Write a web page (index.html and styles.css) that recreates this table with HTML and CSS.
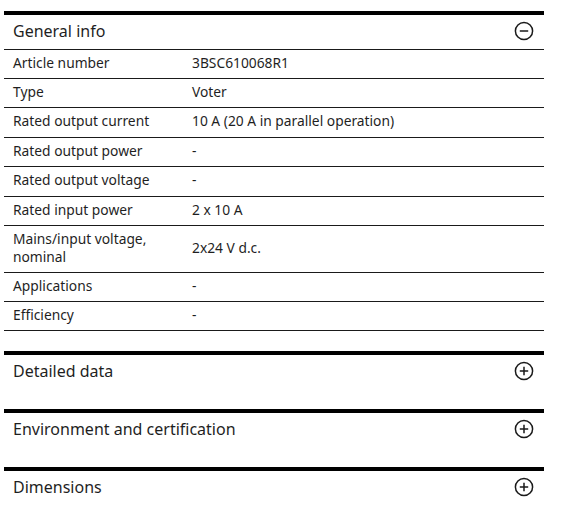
FILE: index.html
```html
<!DOCTYPE html>
<html lang="en">
<head>
<meta charset="utf-8">
<link rel="stylesheet" href="styles.css">
</head>
<body>
<div class="page">
  <section class="section expanded">
    <div class="section-head">
      <span class="section-title">General info</span>
      <svg class="toggle" viewBox="0 0 20 20" width="20" height="20"><circle cx="10" cy="10" r="8.6" fill="none" stroke="#1a1a1a" stroke-width="1.5"/><path d="M5.8 10h8.4" stroke="#1a1a1a" stroke-width="1.5"/></svg>
    </div>
    <div class="rows">
      <div class="row"><div class="label">Article number</div><div class="value">3BSC610068R1</div></div>
      <div class="row"><div class="label">Type</div><div class="value">Voter</div></div>
      <div class="row tall"><div class="label">Rated output current</div><div class="value">10 A (20 A in parallel operation)</div></div>
      <div class="row"><div class="label">Rated output power</div><div class="value">-</div></div>
      <div class="row tall"><div class="label">Rated output voltage</div><div class="value">-</div></div>
      <div class="row"><div class="label">Rated input power</div><div class="value">2 x 10 A</div></div>
      <div class="row"><div class="label">Mains/input voltage, nominal</div><div class="value">2x24 V d.c.</div></div>
      <div class="row"><div class="label">Applications</div><div class="value">-</div></div>
      <div class="row"><div class="label">Efficiency</div><div class="value">-</div></div>
    </div>
  </section>
  <section class="section">
    <div class="section-head">
      <span class="section-title">Detailed data</span>
      <svg class="toggle" viewBox="0 0 20 20" width="20" height="20"><circle cx="10" cy="10" r="8.6" fill="none" stroke="#1a1a1a" stroke-width="1.5"/><path d="M5.8 10h8.4M10 5.8v8.4" stroke="#1a1a1a" stroke-width="1.5"/></svg>
    </div>
  </section>
  <section class="section">
    <div class="section-head">
      <span class="section-title">Environment and certification</span>
      <svg class="toggle" viewBox="0 0 20 20" width="20" height="20"><circle cx="10" cy="10" r="8.6" fill="none" stroke="#1a1a1a" stroke-width="1.5"/><path d="M5.8 10h8.4M10 5.8v8.4" stroke="#1a1a1a" stroke-width="1.5"/></svg>
    </div>
  </section>
  <section class="section">
    <div class="section-head">
      <span class="section-title">Dimensions</span>
      <svg class="toggle" viewBox="0 0 20 20" width="20" height="20"><circle cx="10" cy="10" r="8.6" fill="none" stroke="#1a1a1a" stroke-width="1.5"/><path d="M5.8 10h8.4M10 5.8v8.4" stroke="#1a1a1a" stroke-width="1.5"/></svg>
    </div>
  </section>
</div>
</body>
</html>
```
FILE: styles.css
```css
html, body {
  margin: 0;
  padding: 0;
  background: #fff;
}
body {
  font-family: "Noto Sans", "Open Sans", sans-serif;
  color: #1f1f1f;
}
.page {
  width: 540px;
  margin-left: 4px;
  padding-top: 11px;
}
.section {
  border-top: 4px solid #000;
  margin-bottom: 22px;
}
.section.expanded {
  margin-bottom: 20px;
}
.section-head {
  height: 32px;
  display: flex;
  align-items: center;
  justify-content: space-between;
  padding: 0 10px 0 9px;
}
.expanded .section-head {
  height: 34px;
  align-items: flex-start;
  padding-top: 6px;
  box-sizing: border-box;
}
.section-title {
  font-size: 16px;
  line-height: 20px;
}
.toggle {
  display: block;
  flex: none;
}
.rows {
  border-bottom: 1px solid #1a1a1a;
}
.row {
  display: flex;
  border-top: 1px solid #1a1a1a;
  padding: 4px 0 6px;
  font-size: 13.8px;
  line-height: 18px;
  align-items: center;
}
.row.tall {
  padding-bottom: 7px;
}
.label {
  padding-left: 9px;
  padding-right: 10px;
  box-sizing: border-box;
  width: 188px;
  flex: none;
}
.value {
  flex: 1;
}
```
